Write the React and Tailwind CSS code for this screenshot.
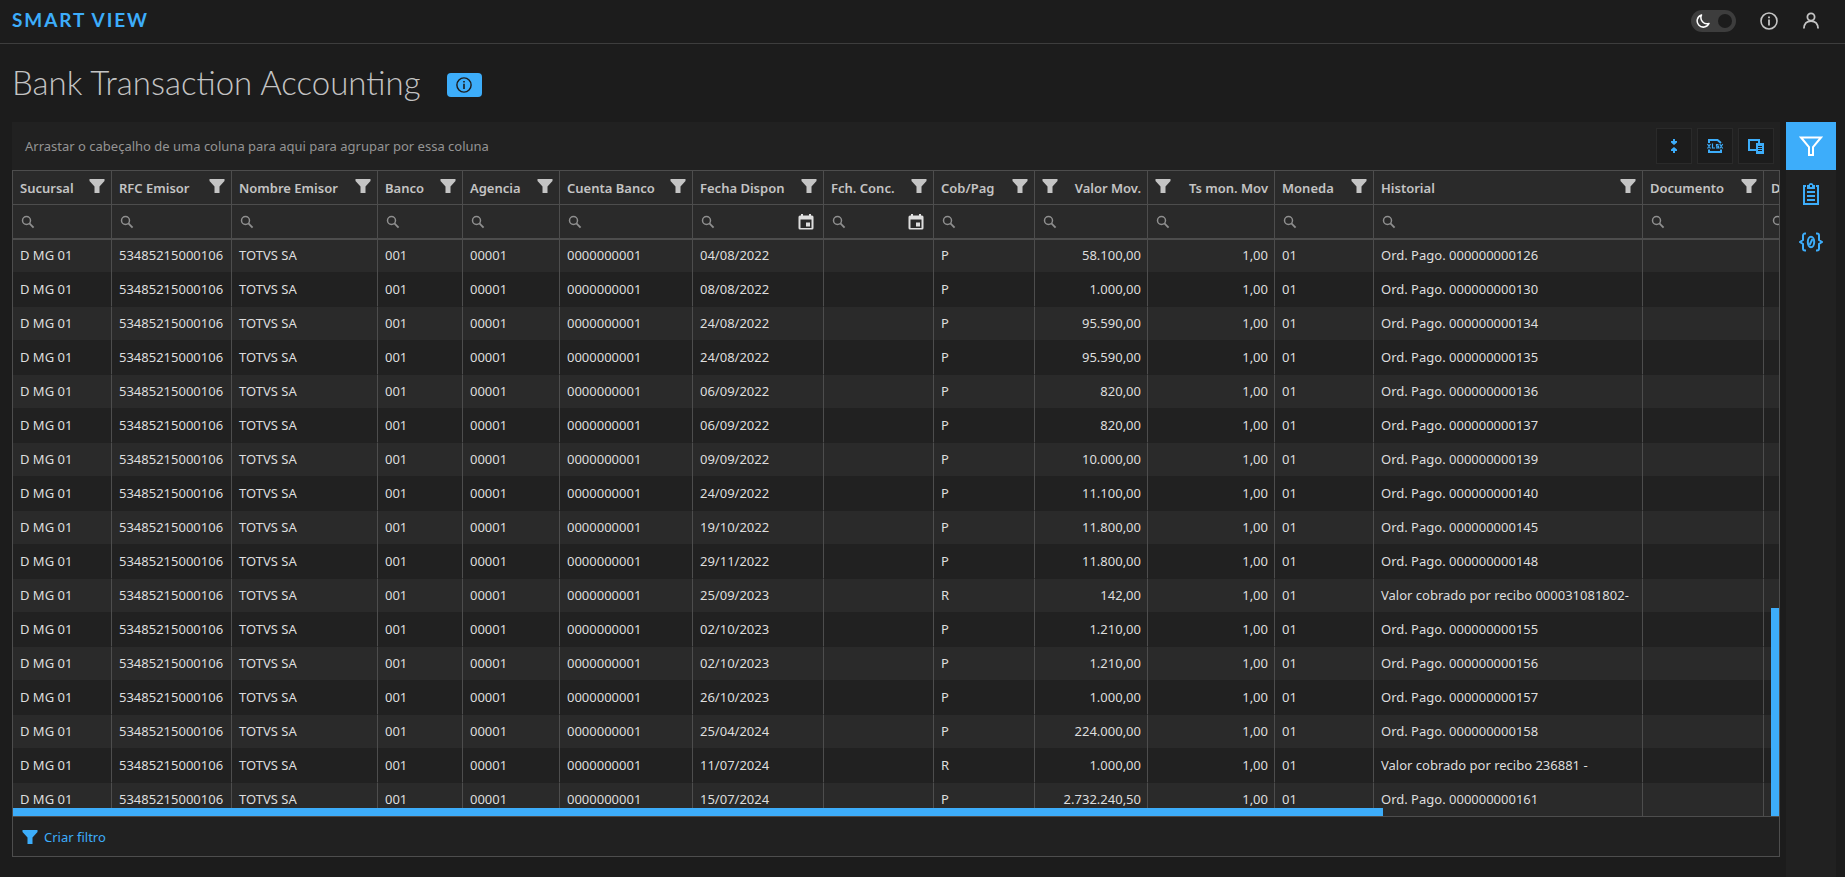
import React, { useState } from 'react';

const TYPEFACE = "font-['Noto_Sans',sans-serif]";

const columns = [
    { key: 'branch', title: 'Sucursal', width: 99 },
    { key: 'rfc', title: 'RFC Emisor', width: 120 },
    { key: 'issuer', title: 'Nombre Emisor', width: 146 },
    { key: 'bank', title: 'Banco', width: 85 },
    { key: 'agency', title: 'Agencia', width: 97 },
    { key: 'account', title: 'Cuenta Banco', width: 133 },
    { key: 'date', title: 'Fecha Dispon', width: 131, type: 'date' },
    { key: 'reconciled', title: 'Fch. Conc.', width: 110, type: 'date' },
    { key: 'kind', title: 'Cob/Pag', width: 101 },
    { key: 'value', title: 'Valor Mov.', width: 113, type: 'number' },
    { key: 'rate', title: 'Ts mon. Mov', width: 127, type: 'number' },
    { key: 'currency', title: 'Moneda', width: 99 },
    { key: 'history', title: 'Historial', width: 269 },
    { key: 'document', title: 'Documento', width: 121 },
    { key: 'description', title: 'D', width: 160 },
];

const totalWidth = columns.reduce((sum, col) => sum + col.width, 0);

const rows = [
    ['04/08/2022', 'P', '58.100,00', 'Ord. Pago. 000000000126'],
    ['08/08/2022', 'P', '1.000,00', 'Ord. Pago. 000000000130'],
    ['24/08/2022', 'P', '95.590,00', 'Ord. Pago. 000000000134'],
    ['24/08/2022', 'P', '95.590,00', 'Ord. Pago. 000000000135'],
    ['06/09/2022', 'P', '820,00', 'Ord. Pago. 000000000136'],
    ['06/09/2022', 'P', '820,00', 'Ord. Pago. 000000000137'],
    ['09/09/2022', 'P', '10.000,00', 'Ord. Pago. 000000000139'],
    ['24/09/2022', 'P', '11.100,00', 'Ord. Pago. 000000000140'],
    ['19/10/2022', 'P', '11.800,00', 'Ord. Pago. 000000000145'],
    ['29/11/2022', 'P', '11.800,00', 'Ord. Pago. 000000000148'],
    ['25/09/2023', 'R', '142,00', 'Valor cobrado por recibo 000031081802-'],
    ['02/10/2023', 'P', '1.210,00', 'Ord. Pago. 000000000155'],
    ['02/10/2023', 'P', '1.210,00', 'Ord. Pago. 000000000156'],
    ['26/10/2023', 'P', '1.000,00', 'Ord. Pago. 000000000157'],
    ['25/04/2024', 'P', '224.000,00', 'Ord. Pago. 000000000158'],
    ['11/07/2024', 'R', '1.000,00', 'Valor cobrado por recibo 236881 -'],
    ['15/07/2024', 'P', '2.732.240,50', 'Ord. Pago. 000000000161'],
].map(([date, kind, value, history]) => ({
    branch: 'D MG 01',
    rfc: '53485215000106',
    issuer: 'TOTVS SA',
    bank: '001',
    agency: '00001',
    account: '0000000001',
    date,
    kind,
    value,
    rate: '1,00',
    currency: '01',
    history,
}));

const FunnelIcon = () => (
    <svg width="16" height="16" viewBox="0 0 16 16" fill="currentColor" aria-hidden="true">
        <path d="M0.5 1h15v2L10.500 8.500V15h-5V8.500L0.500 3z" />
    </svg>
);

const SearchIcon = () => (
    <svg width="14" height="14" viewBox="0 0 14 14" fill="none" stroke="currentColor" aria-hidden="true">
        <circle cx="5.5" cy="5.5" r="4" strokeWidth="1.5" />
        <path d="M8.4 8.4l4.2 4.2" strokeWidth="1.8" />
    </svg>
);

const CalendarIcon = () => (
    <svg width="16" height="16" viewBox="0 0 16 16" fill="currentColor" aria-hidden="true">
        <path fillRule="evenodd" d="M3 0h2v1.5h6V0h2v1.5h1a1.5 1.5 0 0 1 1.5 1.5v11a1.5 1.5 0 0 1-1.5 1.5H2A1.5 1.5 0 0 1 .5 14V3A1.5 1.5 0 0 1 2 1.5h1zM2.500 5.500V14h11V5.500zM8 8.500h4v4H8z" />
    </svg>
);

const InfoIcon = ({ size = 18 }) => (
    <svg width={size} height={size} viewBox="0 0 18 18" fill="none" stroke="currentColor" aria-hidden="true">
        <circle cx="9" cy="9" r="8" strokeWidth="1.6" />
        <path d="M9 7.500v6M9 4.500v1.800" strokeWidth="1.8" />
    </svg>
);

const UserIcon = () => (
    <svg width="18" height="18" viewBox="0 0 18 18" fill="none" stroke="currentColor" strokeWidth="1.8" aria-hidden="true">
        <circle cx="9" cy="5" r="3.6" />
        <path d="M1.900 16.500c.3-4.800 3-7.300 7.100-7.300s6.800 2.500 7.100 7.300" />
    </svg>
);

const MoonIcon = () => (
    <svg width="14" height="14" viewBox="0 0 14 14" fill="none" stroke="currentColor" strokeWidth="1.5" strokeLinejoin="round" aria-hidden="true">
        <path d="M5.500 1A6.200 6.200 0 1 0 13 9.500 6.200 6.200 0 0 1 5.500 1z" />
    </svg>
);

const CollapseIcon = () => (
    <svg width="18" height="18" viewBox="0 0 18 18" fill="currentColor" aria-hidden="true">
        <path d="M8 2h2v2h2v1.500L9 8 6 5.500V4h2zM8 16h2v-2h2v-1.500L9 10l-3 2.500V14h2z" />
    </svg>
);

const XlsxIcon = () => (
    <svg width="18" height="18" viewBox="0 0 18 18" fill="none" stroke="currentColor" aria-hidden="true">
        <path d="M3 6V3h8.500L15 6M3 12.500V15h12v-2.500" strokeWidth="2" />
        <path d="M1.500 7l3 4.500M4.500 7l-3 4.500M6.500 6.500V11h2.500M12.500 7.500H10.500v1.700h2v1.700H10M13.700 7l3 4.500M16.700 7l-3 4.500" strokeWidth="1.2" />
    </svg>
);

const ChooserIcon = () => (
    <svg width="18" height="18" viewBox="0 0 18 18" fill="none" aria-hidden="true">
        <path d="M9 13H2V3h10v3" stroke="currentColor" strokeWidth="2" />
        <path fill="currentColor" fillRule="evenodd" d="M9 6h8v11H9zM11 9v1h4V9zM11 11v1h4v-1zM11 13v1h4v-1z" />
    </svg>
);

const FunnelOutlineIcon = () => (
    <svg width="24" height="22" viewBox="0 0 24 22" fill="none" stroke="currentColor" strokeWidth="2" aria-hidden="true">
        <path d="M2 2.500h20L14 12v8h-4v-8z" />
    </svg>
);

const ClipboardIcon = () => (
    <svg width="18" height="24" viewBox="0 0 18 24" fill="none" stroke="currentColor" strokeWidth="2" aria-hidden="true">
        <path d="M4 4H2v18h14V4h-2" />
        <path fill="currentColor" stroke="none" fillRule="evenodd" d="M5 7V3h1.500a2.600 2.600 0 0 1 5 0H13v4zM8 3v2h2V3z" />
        <path d="M5 10h8M5 14h8M5 18h8" />
    </svg>
);

const BracesIcon = () => (
    <svg width="24" height="20" viewBox="0 0 24 20" fill="none" stroke="currentColor" strokeWidth="2" aria-hidden="true">
        <path d="M7 1.500H6a2 2 0 0 0-2 2V8l-3 2 3 2v4.500a2 2 0 0 0 2 2h1M17 1.500h1a2 2 0 0 1 2 2V8l3 2-3 2v4.500a2 2 0 0 1-2 2h-1" />
        <ellipse cx="12" cy="10" rx="3.200" ry="5.200" />
        <path d="M10.500 13l3-6" />
    </svg>
);

const ToolButton = ({ label, children }) => (
    <button
        aria-label={label}
        className="flex h-9 w-9 items-center justify-center border border-[#2a2a2a] bg-[#1c1c1c] text-[#3dadfa]"
    >
        {children}
    </button>
);

const HeaderCell = ({ col }) => (
    <th scope="col" className="h-[34px] border-r border-b border-[#4d4d4d] pr-1.5 pl-[7px] font-semibold">
        <div className={`flex items-center justify-between ${col.type === 'number' ? 'flex-row-reverse' : ''}`}>
            <span className="whitespace-nowrap">{col.title}</span>
            <button aria-label={`Filtrar ${col.title}`} className="mb-1 shrink-0">
                <FunnelIcon />
            </button>
        </div>
    </th>
);

const FilterCell = ({ col }) => (
    <td className="h-[35px] border-r border-b-2 border-[#4d4d4d] pr-[9px] pl-2">
        <label className="flex items-center gap-1 text-[#8f8f8f]">
            <SearchIcon />
            <input aria-label={`Buscar ${col.title}`} className="w-0 min-w-0 grow bg-transparent outline-none" />
            {col.type === 'date' && (
                <button aria-label="Calendario" className="text-[#dedede]">
                    <CalendarIcon />
                </button>
            )}
        </label>
    </td>
);

const rowStyle = index => {
    if (index === 0) return 'h-8 pb-0.5';
    return index % 2 === 0 ? 'h-[34px] border-t border-t-[#212121] pb-px' : 'h-[34px]';
};

const TransactionGrid = () => (
    <div className="relative h-[647px] overflow-hidden border border-[#4d4d4d]">
        <table className="table-fixed border-separate border-spacing-0 text-left" style={{ width: totalWidth }}>
            <colgroup>
                {columns.map(col => <col key={col.key} style={{ width: col.width }} />)}
            </colgroup>
            <thead className="bg-[#2a2a2a] text-[#c4c4c4]">
                <tr>
                    {columns.map(col => <HeaderCell key={col.key} col={col} />)}
                </tr>
                <tr>
                    {columns.map(col => <FilterCell key={col.key} col={col} />)}
                </tr>
            </thead>
            <tbody className="text-[#dedede]">
                {rows.map((row, index) => (
                    <tr key={row.history} className="odd:bg-[#2a2a2a] even:bg-[#212121]">
                        {columns.map(col => (
                            <td
                                key={col.key}
                                className={`border-r border-r-[#4d4d4d] pr-1.5 pl-[7px] whitespace-nowrap ${rowStyle(index)} ${col.type === 'number' ? 'text-right' : ''}`}
                            >
                                {row[col.key]}
                            </td>
                        ))}
                    </tr>
                ))}
            </tbody>
        </table>
        {/* scrollbar thumbs */}
        <div className="absolute bottom-0 left-0 h-2 w-[77.6%] bg-[#3dadfa]" />
        <div className="absolute right-0 bottom-0 h-52 w-2 bg-[#3dadfa]" />
    </div>
);

const App = () => {
    const [dark, setDark] = useState(true);

    return (
        <div className={`flex min-h-screen flex-col bg-[#1c1c1c] text-[13px] leading-5 text-[#dedede] ${TYPEFACE}`}>
            <header className="flex h-11 items-center justify-between border-b border-[#3d3d3d] pr-[25px] pb-0.5 pl-3">
                <span className="pb-0.5 font-[Lato] text-[19px] font-bold tracking-widest text-[#3dadfa]">SMART VIEW</span>
                <div className="flex items-center gap-6 text-[#c4c4c4]">
                    <label className="relative flex h-[22px] w-[45px] cursor-pointer items-center justify-between rounded-full bg-[#3d3d3d] pr-1 pl-[5px] text-white">
                        <input
                            type="checkbox"
                            aria-label="Modo escuro"
                            checked={dark}
                            onChange={() => setDark(!dark)}
                            className="sr-only"
                        />
                        <MoonIcon />
                        <span className="h-3.5 w-3.5 rounded-full bg-[#1c1c1c]" />
                    </label>
                    <button aria-label="Sobre"><InfoIcon /></button>
                    <button aria-label="Usuário"><UserIcon /></button>
                </div>
            </header>

            <div className="flex h-[78px] items-center gap-[26px] px-3 pb-0.5">
                <h1 className="font-[Lato] text-[33px] leading-10 font-light text-[#c4c4c4]">Bank Transaction Accounting</h1>
                <button aria-label="Detalhes" className="mt-1.5 flex h-6 w-[35px] items-center justify-center rounded-sm bg-[#3dadfa] text-[#1c1c1c]">
                    <InfoIcon size={16} />
                </button>
            </div>

            <main className="flex grow pr-[9px] pl-3">
                <section className="mr-1.5 min-w-0 grow">
                    <div className="flex h-12 items-center justify-between bg-[#212121] pr-1.5 pl-[13px]">
                        <span className="text-[#949494]">Arrastar o cabeçalho de uma coluna para aqui para agrupar por essa coluna</span>
                        <div className="flex gap-[5px]">
                            <ToolButton label="Recolher"><CollapseIcon /></ToolButton>
                            <ToolButton label="Exportar XLSX"><XlsxIcon /></ToolButton>
                            <ToolButton label="Seletor de colunas"><ChooserIcon /></ToolButton>
                        </div>
                    </div>
                    <TransactionGrid />
                    <div className="flex h-10 items-center border-x border-b border-[#4d4d4d] bg-[#212121] px-[9px]">
                        <button className="flex items-center gap-1.5 text-[#3dadfa]">
                            <FunnelIcon />
                            Criar filtro
                        </button>
                    </div>
                </section>

                <nav className="w-[50px] shrink-0 bg-[#212121] text-[#3dadfa]">
                    <button aria-label="Filtros" className="flex h-12 w-full items-center justify-center bg-[#3dadfa] text-white">
                        <FunnelOutlineIcon />
                    </button>
                    <button aria-label="Relatório" className="flex h-12 w-full items-center justify-center">
                        <ClipboardIcon />
                    </button>
                    <button aria-label="Parâmetros" className="flex h-12 w-full items-center justify-center">
                        <BracesIcon />
                    </button>
                </nav>
            </main>
        </div>
    );
};

export default App;
